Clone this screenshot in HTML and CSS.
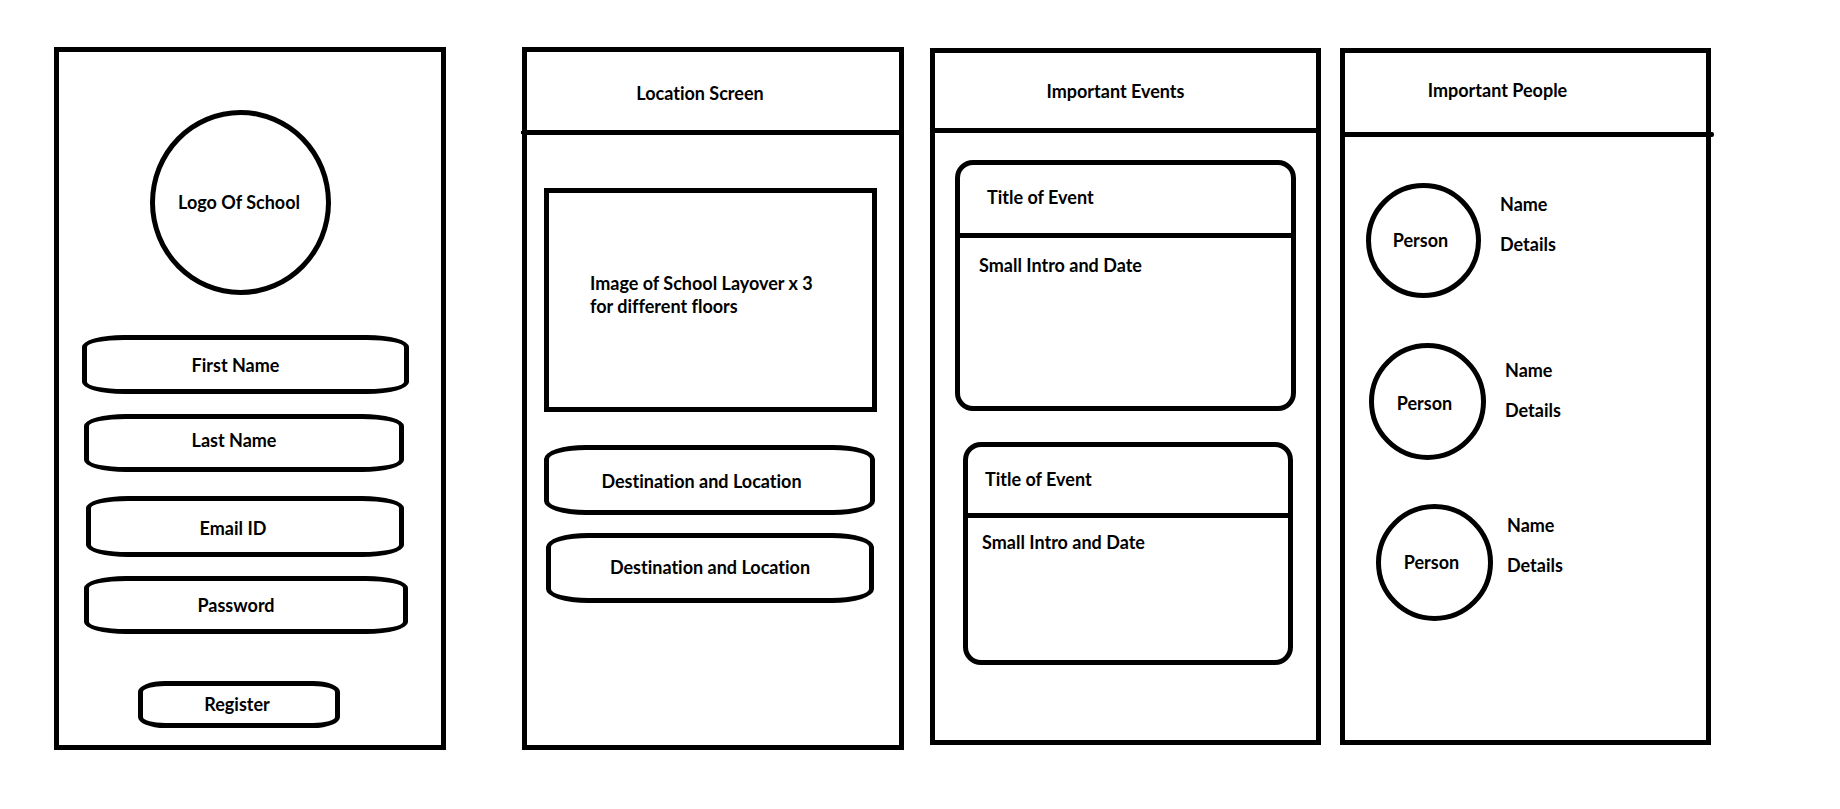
FILE: index.html
```html
<!DOCTYPE html>
<html lang="en">
<head>
<meta charset="utf-8">
<title>School App Wireframes</title>
<link rel="stylesheet" href="styles.css">
</head>
<body>
<main class="board">
  <form class="screen screen-register">
    <div class="school-logo">Logo Of School</div>
    <input class="pill field field-first" type="text" placeholder="First Name" aria-label="First Name">
    <input class="pill field field-last" type="text" placeholder="Last Name" aria-label="Last Name">
    <input class="pill field field-email" type="email" placeholder="Email ID" aria-label="Email ID">
    <input class="pill field field-password" type="password" placeholder="Password" aria-label="Password">
    <button class="pill register" type="button">Register</button>
  </form>

  <section class="screen screen-location">
    <header class="bar"><h2 class="title">Location Screen</h2></header>
    <div class="map">
      <p class="text">Image of School Layover x 3<br>for different floors</p>
    </div>
    <button class="pill place place-first" type="button">Destination and Location</button>
    <button class="pill place place-second" type="button">Destination and Location</button>
  </section>

  <section class="screen screen-events">
    <header class="bar"><h2 class="title">Important Events</h2></header>
    <article class="event event-first">
      <h3 class="event-title">Title of Event</h3>
      <p class="event-intro">Small Intro and Date</p>
    </article>
    <article class="event event-second">
      <h3 class="event-title">Title of Event</h3>
      <p class="event-intro">Small Intro and Date</p>
    </article>
  </section>

  <section class="screen screen-people">
    <header class="bar"><h2 class="title">Important People</h2></header>
    <ul class="people">
      <li class="person person-first">
        <div class="avatar">Person</div>
        <div class="info"><p class="text">Name</p><p class="text">Details</p></div>
      </li>
      <li class="person person-second">
        <div class="avatar">Person</div>
        <div class="info"><p class="text">Name</p><p class="text">Details</p></div>
      </li>
      <li class="person person-third">
        <div class="avatar">Person</div>
        <div class="info"><p class="text">Name</p><p class="text">Details</p></div>
      </li>
    </ul>
  </section>
</main>
</body>
</html>
```
FILE: styles.css
```css
* {
  box-sizing: border-box;
}

body {
  margin: 0;
  background: #fff;
  color: #000;
  font: 700 18px/23px Lato, "Open Sans", sans-serif;
  font-variant-ligatures: none;
}

h2, h3, p, ul {
  margin: 0;
  padding: 0;
  font: inherit;
  font-variant-ligatures: none;
}

.board {
  display: grid;
  grid-template-columns: 468fr 408fr 410fr 371fr;
  align-items: start;
  padding: 47px 129px 47px 54px;
}

.screen {
  display: flex;
  flex-direction: column;
  min-width: 0;
  border: 5px solid #000;
}

.screen-register {
  margin-right: 76px;
  padding: 58px 32px 17px 25px;
}

.screen-location {
  margin-right: 26px;
  padding-bottom: 142px;
}

.screen-events {
  margin: 1px 19px 0 0;
  padding-bottom: 75px;
}

.screen-people {
  margin-top: 1px;
  padding-bottom: 119px;
}

/* Rounded boxes */
.pill {
  border: 5px solid #000;
  border-radius: 42px / 12px;
  background: #fff;
  color: #000;
  font: inherit;
  font-variant-ligatures: none;
  text-align: center;
}

.field {
  width: auto;
  min-width: 0;
  height: 58px;
  padding: 0 20px 0 0;
}

.field::placeholder {
  color: #000;
  opacity: 1;
}

/* Registration */
.school-logo {
  display: flex;
  align-items: center;
  justify-content: center;
  width: 181px;
  height: 185px;
  margin: 0 0 40px 66px;
  padding-right: 3px;
  border: 5px solid #000;
  border-radius: 50%;
}

.field-first {
  height: 59px;
  margin-left: -2px;
}

.field-last {
  margin: 20px 5px 0 0;
  padding-bottom: 6px;
}

.field-email {
  height: 61px;
  margin: 24px 5px 0 2px;
  padding: 2px 24px 0 0;
}

.field-password {
  margin: 19px 1px 0 0;
}

.register {
  align-self: flex-start;
  width: 202px;
  height: 47px;
  margin: 47px 0 0 54px;
  padding: 0 10px 0 6px;
  border-radius: 27px / 11px;
}

/* Title bars */
.bar {
  position: relative;
  border-bottom: 5px solid #000;
  text-align: center;
}

.screen-location .bar {
  padding: 30px 26px 25px 0;
}

.screen-events .bar {
  padding: 27px 20px 25px 0;
}

.screen-people .bar {
  padding: 26px 56px 30px 0;
}

.screen-location .bar::after,
.screen-people .bar::after {
  content: "";
  position: absolute;
  background: #000;
}

.screen-location .bar::after {
  bottom: -4px;
  left: -6px;
  width: 1px;
  height: 3px;
}

.screen-people .bar::after {
  right: -8px;
  bottom: -5px;
  width: 3px;
  height: 5px;
  border-radius: 0 2px 2px 0;
}

/* Location */
.map {
  height: 224px;
  margin: 53px 22px 33px 17px;
  padding: 79px 0 0 41px;
  border: 5px solid #000;
}

.place {
  height: 70px;
  padding: 2px 16px 0 0;
  border-radius: 42px / 14px;
}

.place-first {
  margin: 0 24px 18px 17px;
}

.place-second {
  margin: 0 25px 0 19px;
  padding: 0 0 2px;
}

/* Events */
.event {
  border: 5px solid #000;
  border-radius: 18px;
}

.event-first {
  height: 251px;
  margin: 27px 20px 31px 20px;
}

.event-second {
  height: 223px;
  margin: 0 23px 0 28px;
}

.event-title {
  padding: 21px 0 24px 27px;
  border-bottom: 5px solid #000;
}

.event-intro {
  padding: 16px 0 0 19px;
}

.event-second .event-title {
  padding: 21px 0 22px 17px;
}

.event-second .event-intro {
  padding: 13px 0 0 14px;
}

/* People */
.people {
  display: flex;
  flex-direction: column;
  gap: 44px;
  padding: 46px 0 0 21px;
  list-style: none;
}

.person {
  display: flex;
  gap: 19px;
}

.person-first {
  padding-bottom: 1px;
}

.person-second {
  padding-left: 3px;
}

.person-third {
  padding-left: 10px;
  gap: 14px;
}

.avatar {
  display: flex;
  align-items: center;
  justify-content: center;
  width: 117px;
  height: 117px;
  padding-right: 6px;
  border: 5px solid #000;
  border-radius: 50%;
}

.person-first .avatar {
  width: 115px;
  height: 115px;
}

.person-second .avatar {
  padding-top: 3px;
}

.info {
  display: flex;
  flex-direction: column;
  gap: 17px;
  padding-top: 10px;
}

.person-second .info {
  padding-top: 16px;
}
```
